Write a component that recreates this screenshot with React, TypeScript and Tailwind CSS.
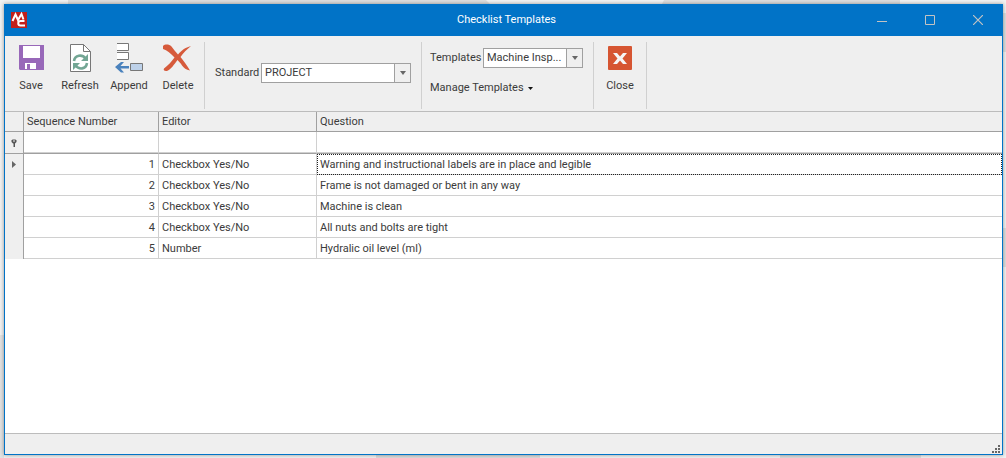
import React, { ReactElement } from 'react'

interface IToolButton {
  label: string
  children: React.ReactNode
}

interface IQuestion {
  sequence: number
  editor: string
  question: string
}

const questions: IQuestion[] = [
  {
    sequence: 1,
    editor: 'Checkbox Yes/No',
    question: 'Warning and instructional labels are in place and legible',
  },
  {
    sequence: 2,
    editor: 'Checkbox Yes/No',
    question: 'Frame is not damaged or bent in any way',
  },
  { sequence: 3, editor: 'Checkbox Yes/No', question: 'Machine is clean' },
  {
    sequence: 4,
    editor: 'Checkbox Yes/No',
    question: 'All nuts and bolts are tight',
  },
  { sequence: 5, editor: 'Number', question: 'Hydralic oil level (ml)' },
]

const columns = ['Sequence Number', 'Editor', 'Question']

const ToolButton: React.FC<IToolButton> = ({
  label,
  children,
}): ReactElement => (
  <button type="button" className="flex w-12 flex-col items-center gap-[5px]">
    {children}
    <span className="leading-4">{label}</span>
  </button>
)

const Separator = (): ReactElement => (
  <div className="mt-1.5 mb-0.5 w-px self-stretch bg-[#d0d0d0]" />
)

const Backdrop = (): ReactElement => (
  <svg
    className="absolute inset-0 h-full w-full"
    viewBox="0 0 1006 458"
    preserveAspectRatio="none"
    aria-hidden="true"
  >
    <path d="M0 0H1006V458H0Z" fill="#f2f2f2" />
    <path d="M68 0H192V4H68Z" fill="#dedede" />
    <path d="M192 0H486L490 4H192ZM664 0H900V4H662Z" fill="#dedede" />
    <path d="M1002 13H1006V52H1002ZM1002 228H1006V267H1002Z" fill="#dedede" />
    <path d="M0 335H4V458H0Z" fill="#e2e2e2" />
    <path d="M376 454H540V458H376ZM780 454H921V458H780Z" fill="#dcdcdc" />
  </svg>
)

const TitleBar = (): ReactElement => (
  <header className="flex h-8 items-center justify-between bg-[#0173c7] text-white">
    <div className="flex flex-1 items-center pl-1.5">
      <svg width="16" height="16" viewBox="0 0 16 16" aria-hidden="true">
        <path d="M0 0H16V16H0Z" fill="#c2201b" />
        <path
          d="M1.500 9L4.500 2.500L7 8L10.500 2L12.500 7.500"
          fill="none"
          stroke="#fff"
          strokeWidth="2"
        />
        <path
          d="M13.500 9H9.500C6.500 9 6.500 13.500 9.500 13.500H14"
          fill="none"
          stroke="#fff"
          strokeWidth="2"
        />
      </svg>
    </div>
    <h1>Checklist Templates</h1>
    <div className="flex flex-1 justify-end">
      <button
        type="button"
        aria-label="Minimize"
        className="flex w-12 justify-center"
      >
        <svg width="10" height="10" viewBox="0 0 10 10">
          <path d="M0 6.500H10" stroke="#c3c3c3" />
        </svg>
      </button>
      <button
        type="button"
        aria-label="Maximize"
        className="flex w-12 justify-center"
      >
        <svg width="10" height="10" viewBox="0 0 10 10">
          <path d="M.5 .5H9.500V9.500H.5Z" fill="none" stroke="#c3c3c3" />
        </svg>
      </button>
      <button
        type="button"
        aria-label="Close window"
        className="flex w-12 justify-center"
      >
        <svg width="10" height="10" viewBox="0 0 10 10">
          <path d="M0 0L10 10M10 0L0 10" stroke="#c3c3c3" strokeWidth="1.200" />
        </svg>
      </button>
    </div>
  </header>
)

const SaveIcon = (): ReactElement => (
  <svg width="32" height="32" viewBox="0 0 32 32" aria-hidden="true">
    <path d="M4 4H29V29H5L4 28Z" fill="#9868b9" />
    <path d="M8 5H25V17H8ZM10 22H21V28H10Z" fill="#fff" />
    <path d="M12 23H15V28H12Z" fill="#9868b9" />
  </svg>
)

const RefreshIcon = (): ReactElement => (
  <svg width="32" height="32" viewBox="0 0 32 32" aria-hidden="true">
    <path
      d="M6.500 3.500H19.500L26.500 10.500V30.500H6.500Z"
      fill="#fff"
      stroke="#777"
    />
    <path d="M19.500 3.500V10.500H26.500" fill="none" stroke="#777" />
    <path
      d="M10 20C11 14 18 13 21.500 17.500M23 22C22 28.500 15 29 11.500 24.500"
      fill="none"
      stroke="#73a694"
      strokeWidth="2.600"
    />
    <path d="M24 13V20H17ZM9 29V22H16Z" fill="#73a694" />
  </svg>
)

const AppendIcon = (): ReactElement => (
  <svg width="32" height="32" viewBox="0 0 32 32" aria-hidden="true">
    <path
      d="M4 2.500H15.500V9.500H4M4 11.500H15.500V18.500H4"
      fill="#fff"
      stroke="#777"
    />
    <path d="M17.500 22.500H29.500V29.500H17.500Z" fill="#bdd1e9" stroke="#777" />
    <path
      d="M2 26L8 21H11L7.500 25H16V27.500H7.500L11 31.500H8Z"
      fill="#4a82bd"
    />
  </svg>
)

const DeleteIcon = (): ReactElement => (
  <svg width="32" height="32" viewBox="0 0 32 32" aria-hidden="true">
    <path
      d="M1 5C3 3 7 3 9.500 5.500C12 8.500 13.500 11 16 13.500C19.500 9.500 23 6.500 29 5C24.500 8.500 21.500 12 18.500 16C21.500 20 25 24 28 29.500C24 29 22 27 20 24.500C18.500 22 17 20.500 15.500 19C12 23.500 9 28.500 5 30C2.500 30.500 1 29 2 27.500C6 24.500 9.500 20.500 12.500 16.500C9 12.500 5 9 1 8Z"
      fill="#d65a3b"
    />
  </svg>
)

const CloseIcon = (): ReactElement => (
  <svg width="32" height="32" viewBox="0 0 32 32" aria-hidden="true">
    <rect x="4" y="5" width="24" height="24" rx="1" fill="#d65532" />
    <path
      d="M9 12H13L16 15.500L19 12H23L18.500 17.500L23 23H19L16 19.500L13 23H9L13.500 17.500Z"
      fill="#f5f5f5"
    />
  </svg>
)

const DropArrow = (): ReactElement => (
  <span className="pointer-events-none absolute inset-y-px right-px flex w-4 items-center justify-center border-l border-[#a0a0a0] bg-[#efefef]">
    <svg width="6" height="4" viewBox="0 0 6 4" aria-hidden="true">
      <path d="M0 0H6L3 4Z" fill="#666" />
    </svg>
  </span>
)

const Toolbar = (): ReactElement => (
  <div className="flex h-19 items-start border-b border-[#bcbcbc] bg-[#efefef]">
    <div className="flex gap-px px-0.5 pt-[5px]">
      <ToolButton label="Save">
        <SaveIcon />
      </ToolButton>
      <ToolButton label="Refresh">
        <RefreshIcon />
      </ToolButton>
      <ToolButton label="Append">
        <AppendIcon />
      </ToolButton>
      <ToolButton label="Delete">
        <DeleteIcon />
      </ToolButton>
    </div>
    <Separator />
    <div className="flex items-center gap-0.5 px-2.5 pt-[27px]">
      <label htmlFor="standard" className="w-11">
        Standard
      </label>
      <div className="relative">
        <select
          id="standard"
          className="block h-5 w-[150px] appearance-none border border-[#a0a0a0] bg-white pl-[3px]"
        >
          <option>PROJECT</option>
        </select>
        <DropArrow />
      </div>
    </div>
    <Separator />
    <div className="flex flex-col gap-3 pt-3 pr-2.5 pl-2">
      <div className="flex items-center gap-0.5">
        <label htmlFor="templates" className="w-[51px]">
          Templates
        </label>
        <div className="relative">
          <select
            id="templates"
            className="block h-5 w-[100px] appearance-none border border-[#a0a0a0] bg-white pl-[3px]"
          >
            <option>Machine Insp...</option>
          </select>
          <DropArrow />
        </div>
      </div>
      <button type="button" className="flex items-center gap-1 leading-4">
        Manage Templates
        <svg width="5" height="3" viewBox="0 0 5 3" aria-hidden="true">
          <path d="M0 0H5L2.500 3Z" fill="#111" />
        </svg>
      </button>
    </div>
    <Separator />
    <div className="px-0.5 pt-[5px]">
      <ToolButton label="Close">
        <CloseIcon />
      </ToolButton>
    </div>
    <Separator />
  </div>
)

const QuestionTable = (): ReactElement => (
  <table className="w-full table-fixed border-separate border-spacing-0">
    <colgroup>
      <col className="w-[19px]" />
      <col className="w-[135px]" />
      <col className="w-[158px]" />
      <col />
    </colgroup>
    <thead>
      <tr className="h-5 bg-[#efefef] text-left">
        <th className="border-r border-b border-[#a0a0a0] p-0" />
        {columns.map((column) => (
          <th
            key={column}
            className="border-r border-b border-[#a0a0a0] px-[3px] py-0 font-normal last:border-r-0"
          >
            {column}
          </th>
        ))}
      </tr>
      <tr className="h-[22px]">
        <td className="border-r border-b border-[#a0a0a0] bg-[#efefef] p-0">
          <svg
            className="mx-auto"
            width="6"
            height="8"
            viewBox="0 0 6 8"
            aria-hidden="true"
          >
            <path
              d="M.5 1.500L1.500 .5H4.500L5.500 1.500V3L4 4.500H2L.5 3Z"
              fill="#555"
            />
            <path d="M2.500 4H4V8H2.500Z" fill="#555" />
            <path d="M2 1.500H4V2.500H2Z" fill="#efefef" />
          </svg>
        </td>
        {columns.map((column) => (
          <td
            key={column}
            className="border-r border-b border-r-[#d0d0d0] border-b-[#a0a0a0] p-0 last:border-r-0"
          >
            <input
              aria-label={`Filter ${column}`}
              className="block h-[21px] w-full border-b border-[#d0d0d0] px-[3px] outline-none"
            />
          </td>
        ))}
      </tr>
    </thead>
    <tbody>
      {questions.map(({ sequence, editor, question }) => (
        <tr key={sequence} className="h-[21px]">
          <td className="border-r border-[#a0a0a0] bg-[#efefef] p-0">
            {sequence === 1 && (
              <svg
                className="mx-auto"
                width="4"
                height="7"
                viewBox="0 0 4 7"
                aria-hidden="true"
              >
                <path d="M0 0L4 3.500L0 7Z" fill="#666" />
              </svg>
            )}
          </td>
          <td className="border-r border-b border-[#d0d0d0] px-[3px] pt-0.5 pb-0 text-right">
            {sequence}
          </td>
          <td className="border-r border-b border-[#d0d0d0] px-[3px] pt-0.5 pb-0">
            {editor}
          </td>
          <td
            className={
              sequence === 1
                ? 'border-b border-[#d0d0d0] px-[3px] pt-0.5 pb-0 outline-1 -outline-offset-1 outline-dotted outline-[#222]'
                : 'border-b border-[#d0d0d0] px-[3px] pt-0.5 pb-0'
            }
          >
            {question}
          </td>
        </tr>
      ))}
    </tbody>
  </table>
)

const StatusBar = (): ReactElement => (
  <footer className="flex h-[21px] items-end justify-end border-t border-[#bcbcbc] bg-[#efefef] px-0.5 py-px">
    <svg width="8" height="8" viewBox="0 0 8 8" aria-hidden="true">
      <path
        d="M6 0H8V2H6ZM6 3H8V5H6ZM3 3H5V5H3ZM6 6H8V8H6ZM3 6H5V8H3ZM0 6H2V8H0Z"
        fill="#666"
      />
    </svg>
  </footer>
)

const App = (): ReactElement => {
  return (
    <div className="relative flex min-h-screen flex-col pt-1 pr-[3px] pb-[3px] pl-1 font-[Roboto,sans-serif] text-[11px] leading-4 text-[#3b3b3b]">
      <Backdrop />
      <main className="relative flex flex-1 flex-col border border-t-0 border-[#0173c7] bg-white shadow-[0_0_4px_rgba(0,0,0,0.4)]">
        <TitleBar />
        <Toolbar />
        <div className="flex-1">
          <QuestionTable />
        </div>
        <StatusBar />
      </main>
    </div>
  )
}

export default App
